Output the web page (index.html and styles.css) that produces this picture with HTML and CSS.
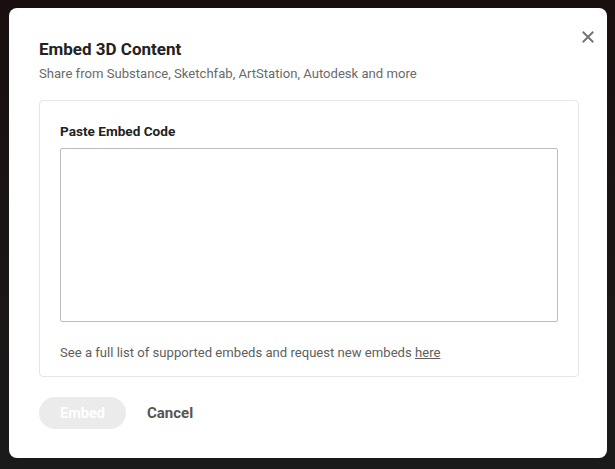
FILE: index.html
```html
<!DOCTYPE html>
<html>
<head>
<meta charset="utf-8">
<link rel="stylesheet" href="styles.css">
</head>
<body>
<div class="modal">
  <button class="close" aria-label="Close">
    <svg width="12" height="12" viewBox="0 0 12 12"><path d="M1.5 1.5 L10.5 10.5 M10.5 1.5 L1.5 10.5" stroke="#767676" stroke-width="2" stroke-linecap="square"/></svg>
  </button>
  <h1 class="title">Embed 3D Content</h1>
  <p class="subtitle">Share from Substance, Sketchfab, ArtStation, Autodesk and more</p>
  <div class="panel">
    <label class="label">Paste Embed Code</label>
    <textarea class="code"></textarea>
    <p class="note">See a full list of supported embeds and request new embeds <a href="#">here</a></p>
  </div>
  <div class="actions">
    <button class="btn-embed">Embed</button>
    <button class="btn-cancel">Cancel</button>
  </div>
</div>
</body>
</html>
```
FILE: styles.css
```css
html, body {
  margin: 0;
  padding: 0;
}
body {
  background: linear-gradient(#190f0f, #1a1616 60%, #1a1a1a);
  height: 469px;
  overflow: hidden;
  font-family: Roboto, "Liberation Sans", sans-serif;
}
.modal {
  position: relative;
  margin: 8px 0 0 9px;
  width: 598px;
  height: 450px;
  box-sizing: border-box;
  background: #fff;
  border-radius: 8px;
  padding: 31px 28px 0 30px;
}
.close {
  position: absolute;
  top: 23px;
  right: 13px;
  width: 12px;
  height: 12px;
  padding: 0;
  border: 0;
  background: none;
  display: flex;
}
.title {
  margin: 0;
  font-size: 17px;
  line-height: 20px;
  font-weight: 700;
  color: #222;
}
.subtitle {
  margin: 6px 0 0;
  font-size: 13.1px;
  line-height: 18px;
  color: #6a6a6a;
}
.panel {
  margin-top: 17px;
  border: 1px solid #e6e6e6;
  border-radius: 4px;
  padding: 21px 20px 14px;
  display: flex;
  flex-direction: column;
}
.label {
  font-size: 13.6px;
  line-height: 18px;
  font-weight: 700;
  color: #222;
}
.code {
  margin-top: 8px;
  height: 174px;
  box-sizing: border-box;
  border: 1px solid #bdbdbd;
  border-radius: 2px;
  resize: none;
  outline: none;
}
.note {
  margin: 22px 0 0;
  font-size: 13.1px;
  line-height: 18px;
  color: #5e5e5e;
}
.note a {
  color: #5e5e5e;
}
.actions {
  margin-top: 20px;
  display: flex;
  align-items: center;
  gap: 21px;
}
.btn-embed {
  width: 87px;
  height: 32px;
  border: 0;
  border-radius: 16px;
  background: #ebebeb;
  color: #fff;
  font-family: inherit;
  font-size: 14.5px;
  font-weight: 700;
}
.btn-cancel {
  border: 0;
  background: none;
  padding: 0;
  font-family: inherit;
  font-size: 15px;
  font-weight: 700;
  color: #555;
}
```
